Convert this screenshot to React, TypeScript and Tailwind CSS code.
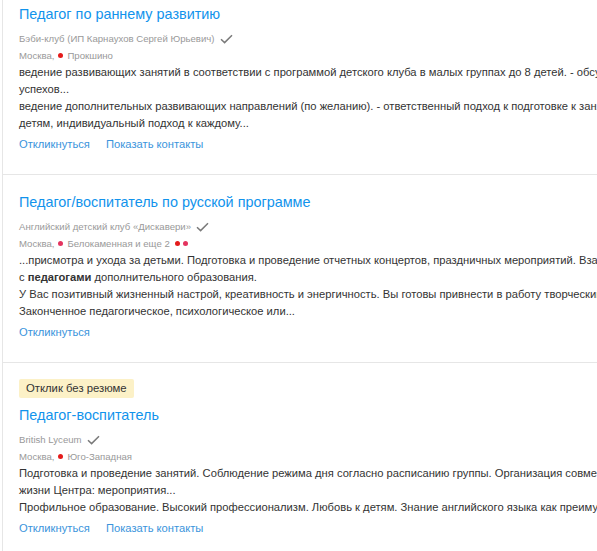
import React from "react";

interface Station {
  name: string;
  color: string;
}

interface Vacancy {
  title: string;
  company: string;
  city: string;
  station: Station;
  more?: { text: string; colors: string[] };
  badge?: string;
  body: React.ReactNode;
  contacts: boolean;
}

const VACANCIES: Vacancy[] = [
  {
    title: "Педагог по раннему развитию",
    company: "Бэби-клуб (ИП Карнаухов Сергей Юрьевич)",
    city: "Москва,",
    station: { name: "Прокшино", color: "#e41b1b" },
    contacts: true,
    body: (
      <>
        <div>
          ведение развивающих занятий в соответствии с программой детского клуба в малых группах до 8 детей. - обсуждение с родителями
          <br />
          успехов...
        </div>
        <div>
          ведение дополнительных развивающих направлений (по желанию). - ответственный подход к подготовке к занятиям. - любовь к
          <br />
          детям, индивидуальный подход к каждому...
        </div>
      </>
    ),
  },
  {
    title: "Педагог/воспитатель по русской программе",
    company: "Английский детский клуб «Дискавери»",
    city: "Москва,",
    station: { name: "Белокаменная", color: "#e4345f" },
    more: { text: "и еще 2", colors: ["#e41b1b", "#e4345f"] },
    contacts: false,
    body: (
      <>
        <div>
          ...присмотра и ухода за детьми. Подготовка и проведение отчетных концертов, праздничных мероприятий. Взаимодействие
          <br />
          с <b>педагогами</b> дополнительного образования.
        </div>
        <div>
          У Вас позитивный жизненный настрой, креативность и энергичность. Вы готовы привнести в работу творческий подход.
          <br />
          Законченное педагогическое, психологическое или...
        </div>
      </>
    ),
  },
  {
    title: "Педагог-воспитатель",
    company: "British Lyceum",
    city: "Москва,",
    station: { name: "Юго-Западная", color: "#e41b1b" },
    badge: "Отклик без резюме",
    contacts: true,
    body: (
      <>
        <div>
          Подготовка и проведение занятий. Соблюдение режима дня согласно расписанию группы. Организация совместной
          <br />
          жизни Центра: мероприятия...
        </div>
        <div>
          Профильное образование. Высокий профессионализм. Любовь к детям. Знание английского языка как преимущество.
        </div>
      </>
    ),
  },
];

function Check() {
  return (
    <svg width="13" height="10" viewBox="0 0 13 10" className="ml-[5px] mt-[1px]">
      <path d="M1 5.2 L4.6 8.6 L12 1.2" fill="none" stroke="#7a7a7a" strokeWidth="1.5" />
    </svg>
  );
}

function Dot({ color }: { color: string }) {
  return <span className="inline-block w-[5px] h-[5px] rounded-full" style={{ backgroundColor: color }} />;
}

function VacancyItem({ v }: { v: Vacancy }) {
  return (
    <div className="border-b border-[#e6e6e6] pl-4 pt-4 pb-[21px]">
      {v.badge && (
        <div className="flex mb-[6px]">
          <span className="bg-[#fcf1c7] text-[#333] text-[11.3px] leading-[19px] px-[7px] rounded-[2px]">
            {v.badge}
          </span>
        </div>
      )}
      <div className="text-[14.4px] leading-[22px] text-[#1193ec]">{v.title}</div>
      <div className="mt-[5px] flex items-center text-[9.6px] leading-[17px] text-[#999]">
        {v.company}
        <Check />
      </div>
      <div className="flex items-center gap-[4px] text-[9.6px] leading-[17px] text-[#999]">
        <span>{v.city}</span>
        <Dot color={v.station.color} />
        <span>
          {v.station.name}
          {v.more ? ` ${v.more.text}` : ""}
        </span>
        {v.more && (
          <span className="flex items-center gap-[3px] ml-[1px]">
            {v.more.colors.map((c, i) => (
              <Dot key={i} color={c} />
            ))}
          </span>
        )}
      </div>
      <div className="w-[1000px] text-[11.2px] leading-[17px] text-[#333]">{v.body}</div>
      <div className="mt-[4px] flex gap-[16px] text-[11.2px] leading-[17px] text-[#3a94dc]">
        <span>Откликнуться</span>
        {v.contacts && <span>Показать контакты</span>}
      </div>
    </div>
  );
}

export default function App() {
  return (
    <div
      className="w-[597px] h-[551px] overflow-hidden bg-white"
      style={{ fontFamily: '"Liberation Sans", Arial, sans-serif' }}
    >
      <div className="ml-[2px] -mt-[13px] border-l border-[#e6e6e6]">
        {VACANCIES.map((v, i) => (
          <VacancyItem key={i} v={v} />
        ))}
      </div>
    </div>
  );
}
